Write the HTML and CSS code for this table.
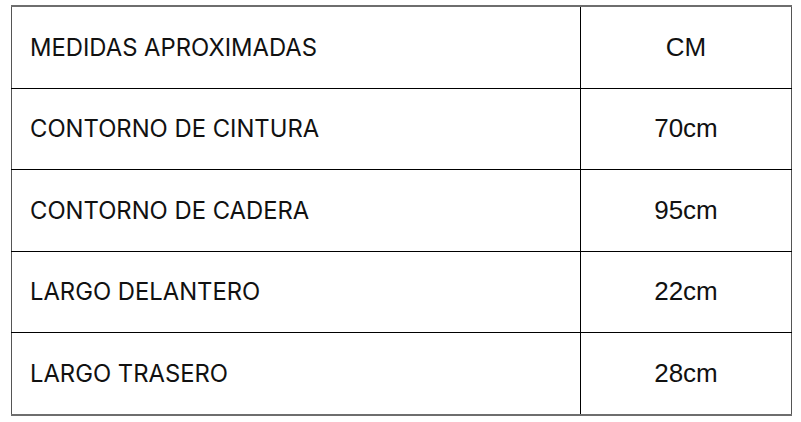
FILE: index.html
```html
<!DOCTYPE html>
<html lang="es">
<head>
<meta charset="utf-8">
<link rel="stylesheet" href="styles.css">
</head>
<body>
<table class="sizes">
  <colgroup><col class="col-label"><col class="col-value"></colgroup>
  <tr><td class="label">MEDIDAS APROXIMADAS</td><td class="value">CM</td></tr>
  <tr><td class="label">CONTORNO DE CINTURA</td><td class="value">70cm</td></tr>
  <tr><td class="label">CONTORNO DE CADERA</td><td class="value">95cm</td></tr>
  <tr><td class="label">LARGO DELANTERO</td><td class="value">22cm</td></tr>
  <tr><td class="label">LARGO TRASERO</td><td class="value">28cm</td></tr>
</table>
</body>
</html>
```
FILE: styles.css
```css
html, body {
  margin: 0;
  padding: 0;
  background: #fff;
}
body {
  padding: 5px 9px 0 11px;
}
.sizes {
  border-collapse: collapse;
  width: 781px;
  table-layout: fixed;
}
.col-label { width: 569px; }
.sizes td {
  border: 1px solid #000;
  height: 80.5px;
  padding: 0;
  vertical-align: middle;
  color: #111;
}
.sizes tr:first-child td { border-top: 2px solid #6e6e6e; }
.sizes tr:last-child td { border-bottom: 2px solid #6e6e6e; }
.sizes td:first-child { border-left: 1px solid #555; }
.sizes td:last-child { border-right: 1px solid #555; }
.label {
  padding-left: 18px !important;
  font-family: Inter, "Noto Sans", sans-serif;
  font-size: 23.8px;
}
.value {
  text-align: center;
  font-family: "Liberation Sans", Arial, sans-serif;
  font-size: 26px;
}
```
